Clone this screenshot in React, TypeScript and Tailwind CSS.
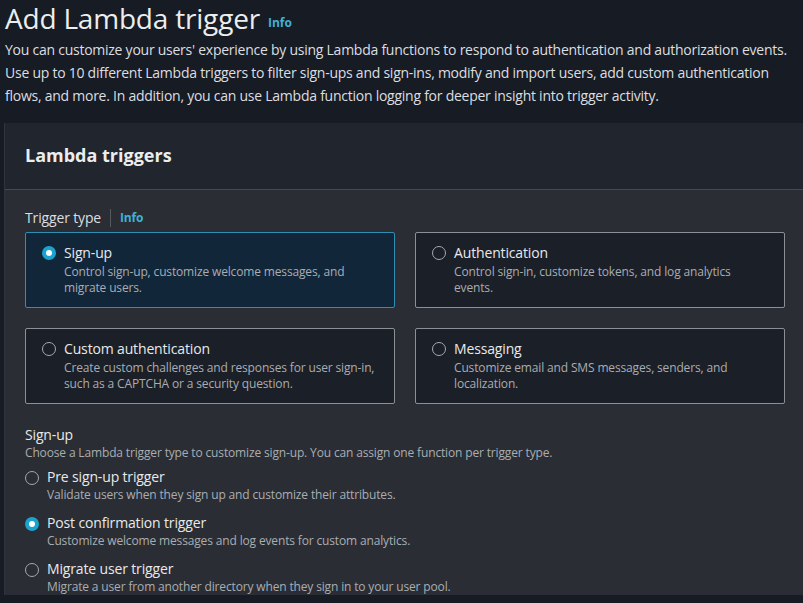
import React from "react";

const font = { fontFamily: '"Open Sans", "Noto Sans", sans-serif' };

function Radio({ checked }: { checked?: boolean }) {
  return checked ? (
    <span className="flex h-[14px] w-[14px] shrink-0 items-center justify-center rounded-full bg-[#1aa3cf]">
      <span className="block h-[6px] w-[6px] rounded-full bg-white" />
    </span>
  ) : (
    <span className="block h-[14px] w-[14px] shrink-0 rounded-full border-[1.5px] border-solid border-[#a4a9b0]" />
  );
}

function Tile({ title, desc, checked }: { title: string; desc: React.ReactNode; checked?: boolean }) {
  return (
    <div
      className={
        "h-[76px] rounded-[2px] border pl-[16px] pr-4 pt-[9px] " +
        (checked ? "border-[#2c8fb3] bg-[#12263a]" : "border-[#8b9097] bg-[#1b1f27]")
      }
    >
      <div className="flex items-start gap-[8px]">
        <div className="pt-[4px]">
          <Radio checked={checked} />
        </div>
        <div className="tracking-[-0.15px]">
          <div className="text-[14px] leading-[22px] text-[#e8e9ea]">{title}</div>
          <div className="text-[12px] leading-[16px] text-[#a9adb3]">{desc}</div>
        </div>
      </div>
    </div>
  );
}

function Option({ title, desc, checked }: { title: string; desc: string; checked?: boolean }) {
  return (
    <div className="flex items-start gap-[8px]">
      <div className="pt-[4px]">
        <Radio checked={checked} />
      </div>
      <div className="tracking-[-0.15px]">
        <div className="text-[14px] leading-[20px] text-[#e8e9ea]">{title}</div>
        <div className="text-[12px] leading-[16px] text-[#a9adb3]">{desc}</div>
      </div>
    </div>
  );
}

export default function App() {
  return (
    <div className="h-[603px] w-[803px] overflow-hidden bg-[#171b23]" style={font}>
      <div className="px-[5px] pt-[1px]">
        <div className="flex items-end gap-[8px]">
          <h1 className="text-[28px] leading-[34px] tracking-[-0.2px] text-[#eceded]">Add Lambda trigger</h1>
          <span className="pb-[5px] text-[12px] font-bold leading-[14px] text-[#3fb1d6]">Info</span>
        </div>
        <p className="mt-[3px] w-[800px] text-[14px] leading-[23px] tracking-[-0.25px] text-[#dcdee0]">
          You can customize your users' experience by using Lambda functions to respond to authentication and authorization events. Use up to 10 different Lambda triggers to filter sign-ups and sign-ins, modify and import users, add custom authentication flows, and more. In addition, you can use Lambda function logging for deeper insight into trigger activity.
        </p>
      </div>
      <div className="ml-[4px] mt-[16px] w-[802px] border-l border-[#30343b] bg-[#2a2d33]">
        <div className="h-[67px] border-b border-[#454a51] bg-[#21252d] pl-[20px] pt-[19px]">
          <h2 className="text-[18px] font-bold leading-[26px] text-[#eceded]">Lambda triggers</h2>
        </div>
        <div className="px-[20px] pt-[18px]">
          <div className="flex items-center text-[14px] leading-[20px] tracking-[-0.15px]">
            <span className="text-[#dcdee0]">Trigger type</span>
            <span className="mx-[9px] h-[18px] w-px bg-[#555a61]" />
            <span className="text-[12px] font-bold text-[#3fb1d6]">Info</span>
          </div>
          <div className="mt-[4px] grid w-[760px] grid-cols-2 gap-x-[20px] gap-y-[20px]">
            <Tile checked title="Sign-up" desc={<>Control sign-up, customize welcome messages, and<br />migrate users.</>} />
            <Tile title="Authentication" desc={<>Control sign-in, customize tokens, and log analytics<br />events.</>} />
            <Tile title="Custom authentication" desc={<>Create custom challenges and responses for user sign-in,<br />such as a CAPTCHA or a security question.</>} />
            <Tile title="Messaging" desc={<>Customize email and SMS messages, senders, and<br />localization.</>} />
          </div>
          <div className="mt-[21px]">
            <div className="text-[14px] leading-[20px] tracking-[-0.15px] text-[#e8e9ea]">Sign-up</div>
            <div className="text-[12px] leading-[16px] tracking-[-0.15px] text-[#a9adb3]">
              Choose a Lambda trigger type to customize sign-up. You can assign one function per trigger type.
            </div>
            <div className="mt-[6px] flex flex-col gap-[10px]">
              <Option title="Pre sign-up trigger" desc="Validate users when they sign up and customize their attributes." />
              <Option checked title="Post confirmation trigger" desc="Customize welcome messages and log events for custom analytics." />
              <Option title="Migrate user trigger" desc="Migrate a user from another directory when they sign in to your user pool." />
            </div>
          </div>
        </div>
      </div>
    </div>
  );
}
